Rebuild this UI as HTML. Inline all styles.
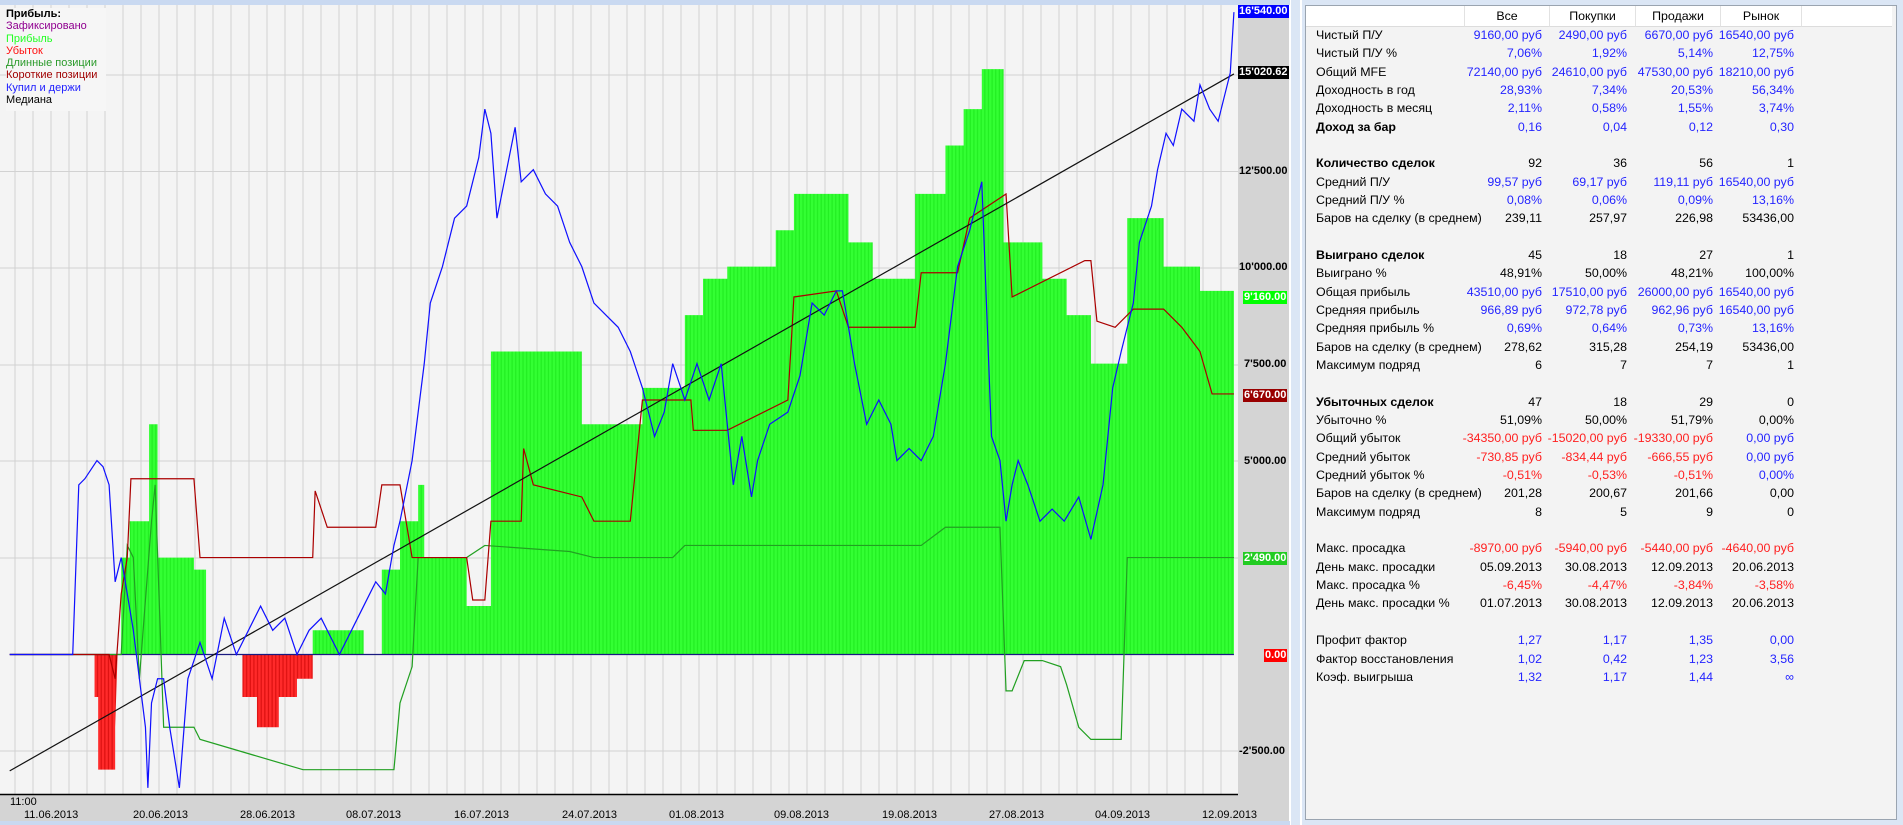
<!DOCTYPE html>
<html><head><meta charset="utf-8">
<style>
body{margin:0;width:1903px;height:825px;overflow:hidden;background:#dbe6f5;font-family:Tahoma,"Liberation Sans","DejaVu Sans",sans-serif;}
#tbl{position:absolute;left:1305px;top:5px;width:592px;height:815px;background:#f3f3f3;border:1px solid #9aa4b0;box-sizing:border-box;}
.r{position:absolute;left:0;width:1903px;height:16px;line-height:16px;font-size:12.4px;color:#000;}
.r span{position:absolute;white-space:nowrap;}
.l{left:1316px}
.c1{right:361px}.c2{right:276px}.c3{right:190px}.c4{right:109px}
.b{color:#2424ff}.d{color:#ff2020}.k{font-weight:bold}
.hdr{position:absolute;top:6px;height:21px;background:#fff;border-right:1px solid #e2e2e2;border-bottom:1px solid #dcdcdc;font-size:12.4px;line-height:21px;text-align:center;box-sizing:border-box}
.ax{position:absolute;font-size:11px;font-weight:bold;line-height:13px;padding:0 1px;white-space:nowrap}
</style></head><body>
<svg width="1903" height="825" style="position:absolute;left:0;top:0">
<defs>
<pattern id="gp" width="3" height="10" patternUnits="userSpaceOnUse"><rect width="3" height="10" fill="#22ee22"/><rect width="2" height="10" fill="#33ff33"/></pattern>
<pattern id="rp" width="3" height="10" patternUnits="userSpaceOnUse"><rect width="3" height="10" fill="#dd1111"/><rect width="2" height="10" fill="#ff2a2a"/></pattern>
</defs>
<rect x="0" y="0" width="1300" height="825" fill="#dbe6f5"/>
<rect x="0" y="5" width="1238" height="789" fill="#f4f4f4"/>
<g stroke="#d2d2d2" stroke-width="1">
<path d="M15 5V794M33 5V794M51 5V794M69 5V794M87 5V794M105 5V794M123 5V794M141 5V794M159 5V794M177 5V794M195 5V794M213 5V794M231 5V794M249 5V794M267 5V794M285 5V794M303 5V794M321 5V794M339 5V794M357 5V794M375 5V794M393 5V794M411 5V794M429 5V794M447 5V794M465 5V794M483 5V794M501 5V794M519 5V794M537 5V794M555 5V794M573 5V794M591 5V794M609 5V794M627 5V794M645 5V794M663 5V794M681 5V794M699 5V794M717 5V794M735 5V794M753 5V794M771 5V794M789 5V794M807 5V794M825 5V794M843 5V794M861 5V794M879 5V794M897 5V794M915 5V794M933 5V794M951 5V794M969 5V794M987 5V794M1005 5V794M1023 5V794M1041 5V794M1059 5V794M1077 5V794M1095 5V794M1113 5V794M1131 5V794M1149 5V794M1167 5V794M1185 5V794M1203 5V794M1221 5V794"/>
<path d="M0 75H1238M0 171.5H1238M0 268H1238M0 365H1238M0 461H1238M0 558H1238M0 751H1238"/>
</g>
<g transform="scale(1.2121)">
<polygon fill="url(#gp)" points="100,540 100,460 107,460 107,430 123,430 123,350 130,350 130,460 160,460 160,470 170,470 170,540 258,540 258,520 300,520 300,540 315,540 315,470 330,470 330,430 345,430 345,400 350,400 350,460 385,460 385,500 405,500 405,290 480,290 480,350 530,350 530,320 565,320 565,260 580,260 580,230 600,230 600,220 640,220 640,190 655,190 655,160 700,160 700,200 720,200 720,230 755,230 755,160 780,160 780,120 795,120 795,90 810,90 810,57 828,57 828,200 860,200 860,230 880,230 880,260 900,260 900,300 930,300 930,180 960,180 960,220 990,220 990,240 1018,240 1018,540"/>
<polygon fill="url(#rp)" points="78,540 78,575 81,575 81,635 95,635 95,600 97,540"/>
<polygon fill="url(#rp)" points="200,540 200,575 212,575 212,600 230,600 230,575 245,575 245,560 258,560 258,540"/>
<line x1="8" y1="540" x2="1018" y2="540" stroke="#1a1a80" stroke-width="1"/>
<polyline fill="none" stroke="#22a022" stroke-width="1" points="8,540 100,540 105,450 110,460 115,560 125,430 128,400 135,600 160,600 165,610 250,635 325,635 330,580 340,550 345,460 385,460 400,450 470,455 490,460 555,460 565,450 760,450 780,435 825,435 830,570 835,570 845,545 860,545 875,550 880,565 890,600 900,610 925,610 930,460 1018,460"/>
<polyline fill="none" stroke="#aa0000" stroke-width="1" points="8,540 90,540 95,560 100,490 105,460 108,395 160,395 165,460 258,460 260,405 270,435 310,435 315,400 330,400 340,460 385,460 390,495 400,495 405,430 430,430 432,370 440,400 480,410 490,430 520,430 530,330 570,330 572,355 600,355 650,330 655,245 690,240 700,270 755,270 760,225 790,225 800,180 830,160 835,245 895,215 900,215 905,265 920,270 935,255 960,255 975,270 990,290 1000,325 1018,325"/>
<line x1="8" y1="636" x2="1018" y2="61" stroke="#111" stroke-width="1"/>
<polyline fill="none" stroke="#1010ff" stroke-width="1" points="8,540 60,540 65,400 70,395 80,380 85,385 90,400 95,480 100,460 110,520 115,560 120,600 122,650 125,580 130,560 135,560 140,600 148,650 155,560 165,530 175,560 185,510 195,540 205,520 215,500 225,520 235,510 245,540 255,520 265,510 280,540 290,520 300,500 310,480 318,490 325,450 330,430 340,380 350,300 355,250 365,220 375,180 385,170 395,130 400,90 405,110 410,180 420,130 425,105 430,150 440,140 450,160 460,170 470,200 480,220 490,250 500,260 510,270 520,290 530,320 535,340 540,360 548,340 555,300 565,330 575,300 585,330 595,300 605,400 612,360 620,410 625,380 635,350 650,340 660,310 670,250 680,260 690,240 695,240 705,300 715,350 725,330 735,350 740,380 750,370 760,380 770,360 780,300 790,220 800,190 810,150 818,360 825,380 830,430 835,400 840,380 848,400 858,430 868,420 878,430 890,410 900,445 910,400 918,320 925,290 930,270 935,250 940,200 950,170 955,140 962,110 968,120 975,90 985,100 990,70 998,90 1005,100 1010,80 1015,60 1018,10"/>
</g>
<rect x="1238" y="5" width="51" height="789" fill="#d4d4d4"/>
<rect x="0" y="794" width="1289" height="27" fill="#d4d4d4"/>
<line x1="0" y1="794.5" x2="1238" y2="794.5" stroke="#000" stroke-width="1.5"/>
<rect x="1289" y="0" width="2" height="825" fill="#fff"/>
<rect x="1300" y="0" width="2" height="825" fill="#fff"/>
<rect x="0" y="0" width="1290" height="5" fill="#c9d9f1"/>
<rect x="0" y="821" width="1290" height="4" fill="#c9d9f1"/>
</svg>

<div style="position:absolute;left:6px;top:8px;width:100px;height:103px;background:#f6f6f6;font-size:11px;line-height:12.3px">
<div style="font-weight:bold;color:#000">Прибыль:</div>
<div style="color:#900090">Зафиксировано</div>
<div style="color:#22ff22">Прибыль</div>
<div style="color:#ff1010">Убыток</div>
<div style="color:#2a9a2a">Длинные позиции</div>
<div style="color:#a00000">Короткие позиции</div>
<div style="color:#2020ff">Купил и держи</div>
<div style="color:#000">Медиана</div>
</div>

<div class="ax" style="left:1238px;top:5px;background:#0000ff;color:#fff">16'540.00</div>
<div class="ax" style="left:1238px;top:66px;background:#000;color:#fff">15'020.62</div>
<div class="ax" style="left:1238px;top:165px;color:#000">12'500.00</div>
<div class="ax" style="left:1238px;top:261px;color:#000">10'000.00</div>
<div class="ax" style="left:1243px;top:291px;background:#00ff00;color:#fff">9'160.00</div>
<div class="ax" style="left:1243px;top:358px;color:#000">7'500.00</div>
<div class="ax" style="left:1243px;top:389px;background:#990000;color:#fff">6'670.00</div>
<div class="ax" style="left:1243px;top:455px;color:#000">5'000.00</div>
<div class="ax" style="left:1243px;top:552px;background:#22cc22;color:#fff">2'490.00</div>
<div class="ax" style="left:1264px;top:649px;background:#ff0000;color:#fff">0.00</div>
<div class="ax" style="left:1238px;top:745px;color:#000">-2'500.00</div>

<div style="position:absolute;left:10px;top:796px;font-size:11px">11:00</div>
<div style="position:absolute;top:809px;left:0;width:1290px;font-size:11px;height:13px;line-height:13px">
<span style="position:absolute;left:24px">11.06.2013</span>
<span style="position:absolute;left:133px">20.06.2013</span>
<span style="position:absolute;left:240px">28.06.2013</span>
<span style="position:absolute;left:346px">08.07.2013</span>
<span style="position:absolute;left:454px">16.07.2013</span>
<span style="position:absolute;left:562px">24.07.2013</span>
<span style="position:absolute;left:669px">01.08.2013</span>
<span style="position:absolute;left:774px">09.08.2013</span>
<span style="position:absolute;left:882px">19.08.2013</span>
<span style="position:absolute;left:989px">27.08.2013</span>
<span style="position:absolute;left:1095px">04.09.2013</span>
<span style="position:absolute;left:1202px">12.09.2013</span>
</div>

<div id="tbl"></div>
<div class="hdr" style="left:1306px;width:159px"></div>
<div class="hdr" style="left:1465px;width:85px">Все</div>
<div class="hdr" style="left:1550px;width:86px">Покупки</div>
<div class="hdr" style="left:1636px;width:85px">Продажи</div>
<div class="hdr" style="left:1721px;width:81px">Рынок</div>
<div class="hdr" style="left:1802px;width:90px;border-right:none"></div>

<div class="r" style="top:27px"><span class="l">Чистый П/У</span><span class="c1 b">9160,00 руб</span><span class="c2 b">2490,00 руб</span><span class="c3 b">6670,00 руб</span><span class="c4 b">16540,00 руб</span></div>
<div class="r" style="top:45px"><span class="l">Чистый П/У %</span><span class="c1 b">7,06%</span><span class="c2 b">1,92%</span><span class="c3 b">5,14%</span><span class="c4 b">12,75%</span></div>
<div class="r" style="top:64px"><span class="l">Общий MFE</span><span class="c1 b">72140,00 руб</span><span class="c2 b">24610,00 руб</span><span class="c3 b">47530,00 руб</span><span class="c4 b">18210,00 руб</span></div>
<div class="r" style="top:82px"><span class="l">Доходность в год</span><span class="c1 b">28,93%</span><span class="c2 b">7,34%</span><span class="c3 b">20,53%</span><span class="c4 b">56,34%</span></div>
<div class="r" style="top:100px"><span class="l">Доходность в месяц</span><span class="c1 b">2,11%</span><span class="c2 b">0,58%</span><span class="c3 b">1,55%</span><span class="c4 b">3,74%</span></div>
<div class="r" style="top:119px"><span class="l k">Доход за бар</span><span class="c1 b">0,16</span><span class="c2 b">0,04</span><span class="c3 b">0,12</span><span class="c4 b">0,30</span></div>

<div class="r" style="top:155px"><span class="l k">Количество сделок</span><span class="c1">92</span><span class="c2">36</span><span class="c3">56</span><span class="c4">1</span></div>
<div class="r" style="top:174px"><span class="l">Средний П/У</span><span class="c1 b">99,57 руб</span><span class="c2 b">69,17 руб</span><span class="c3 b">119,11 руб</span><span class="c4 b">16540,00 руб</span></div>
<div class="r" style="top:192px"><span class="l">Средний П/У %</span><span class="c1 b">0,08%</span><span class="c2 b">0,06%</span><span class="c3 b">0,09%</span><span class="c4 b">13,16%</span></div>
<div class="r" style="top:210px"><span class="l">Баров на сделку (в среднем)</span><span class="c1">239,11</span><span class="c2">257,97</span><span class="c3">226,98</span><span class="c4">53436,00</span></div>

<div class="r" style="top:247px"><span class="l k">Выиграно сделок</span><span class="c1">45</span><span class="c2">18</span><span class="c3">27</span><span class="c4">1</span></div>
<div class="r" style="top:265px"><span class="l">Выиграно %</span><span class="c1">48,91%</span><span class="c2">50,00%</span><span class="c3">48,21%</span><span class="c4">100,00%</span></div>
<div class="r" style="top:284px"><span class="l">Общая прибыль</span><span class="c1 b">43510,00 руб</span><span class="c2 b">17510,00 руб</span><span class="c3 b">26000,00 руб</span><span class="c4 b">16540,00 руб</span></div>
<div class="r" style="top:302px"><span class="l">Средняя прибыль</span><span class="c1 b">966,89 руб</span><span class="c2 b">972,78 руб</span><span class="c3 b">962,96 руб</span><span class="c4 b">16540,00 руб</span></div>
<div class="r" style="top:320px"><span class="l">Средняя прибыль %</span><span class="c1 b">0,69%</span><span class="c2 b">0,64%</span><span class="c3 b">0,73%</span><span class="c4 b">13,16%</span></div>
<div class="r" style="top:339px"><span class="l">Баров на сделку (в среднем)</span><span class="c1">278,62</span><span class="c2">315,28</span><span class="c3">254,19</span><span class="c4">53436,00</span></div>
<div class="r" style="top:357px"><span class="l">Максимум подряд</span><span class="c1">6</span><span class="c2">7</span><span class="c3">7</span><span class="c4">1</span></div>

<div class="r" style="top:394px"><span class="l k">Убыточных сделок</span><span class="c1">47</span><span class="c2">18</span><span class="c3">29</span><span class="c4">0</span></div>
<div class="r" style="top:412px"><span class="l">Убыточно %</span><span class="c1">51,09%</span><span class="c2">50,00%</span><span class="c3">51,79%</span><span class="c4">0,00%</span></div>
<div class="r" style="top:430px"><span class="l">Общий убыток</span><span class="c1 d">-34350,00 руб</span><span class="c2 d">-15020,00 руб</span><span class="c3 d">-19330,00 руб</span><span class="c4 b">0,00 руб</span></div>
<div class="r" style="top:449px"><span class="l">Средний убыток</span><span class="c1 d">-730,85 руб</span><span class="c2 d">-834,44 руб</span><span class="c3 d">-666,55 руб</span><span class="c4 b">0,00 руб</span></div>
<div class="r" style="top:467px"><span class="l">Средний убыток %</span><span class="c1 d">-0,51%</span><span class="c2 d">-0,53%</span><span class="c3 d">-0,51%</span><span class="c4 b">0,00%</span></div>
<div class="r" style="top:485px"><span class="l">Баров на сделку (в среднем)</span><span class="c1">201,28</span><span class="c2">200,67</span><span class="c3">201,66</span><span class="c4">0,00</span></div>
<div class="r" style="top:504px"><span class="l">Максимум подряд</span><span class="c1">8</span><span class="c2">5</span><span class="c3">9</span><span class="c4">0</span></div>

<div class="r" style="top:540px"><span class="l">Макс. просадка</span><span class="c1 d">-8970,00 руб</span><span class="c2 d">-5940,00 руб</span><span class="c3 d">-5440,00 руб</span><span class="c4 d">-4640,00 руб</span></div>
<div class="r" style="top:559px"><span class="l">День макс. просадки</span><span class="c1">05.09.2013</span><span class="c2">30.08.2013</span><span class="c3">12.09.2013</span><span class="c4">20.06.2013</span></div>
<div class="r" style="top:577px"><span class="l">Макс. просадка %</span><span class="c1 d">-6,45%</span><span class="c2 d">-4,47%</span><span class="c3 d">-3,84%</span><span class="c4 d">-3,58%</span></div>
<div class="r" style="top:595px"><span class="l">День макс. просадки %</span><span class="c1">01.07.2013</span><span class="c2">30.08.2013</span><span class="c3">12.09.2013</span><span class="c4">20.06.2013</span></div>

<div class="r" style="top:632px"><span class="l">Профит фактор</span><span class="c1 b">1,27</span><span class="c2 b">1,17</span><span class="c3 b">1,35</span><span class="c4 b">0,00</span></div>
<div class="r" style="top:651px"><span class="l">Фактор восстановления</span><span class="c1 b">1,02</span><span class="c2 b">0,42</span><span class="c3 b">1,23</span><span class="c4 b">3,56</span></div>
<div class="r" style="top:669px"><span class="l">Коэф. выигрыша</span><span class="c1 b">1,32</span><span class="c2 b">1,17</span><span class="c3 b">1,44</span><span class="c4 b">∞</span></div>
</body></html>
